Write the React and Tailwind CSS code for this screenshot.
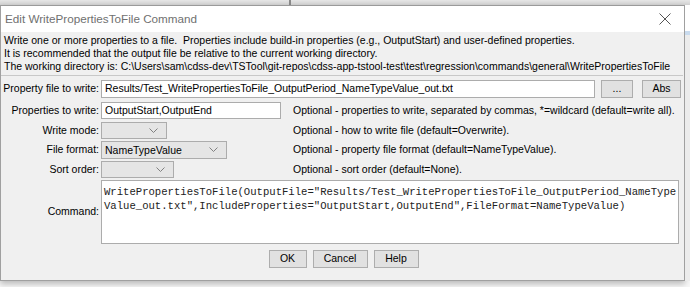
import React from "react";

const F = { fontFamily: '"Liberation Sans", Arial, sans-serif' };

function Combo({ w, value }) {
  return (
    <div
      className="flex items-center h-full border border-[#acacac] bg-[#e5e5e5]"
      style={{ width: w }}
    >
      <span className="flex-1 pl-[3px] text-[10.5px] text-black leading-none whitespace-nowrap">{value}</span>
      <svg width="9" height="6" viewBox="0 0 9 6" className="mr-[8px]">
        <path d="M0.5 0.5 L4.5 4.5 L8.5 0.5" fill="none" stroke="#808080" strokeWidth="1" />
      </svg>
    </div>
  );
}

function Btn({ children, w }) {
  return (
    <div
      className="flex items-center justify-center h-[18px] border border-[#adadad] bg-[#e1e1e1] text-[10.5px] text-black whitespace-nowrap"
      style={{ width: w }}
    >
      {children}
    </div>
  );
}

export default function App() {
  return (
    <div className="w-[690px] h-[287px] bg-[#f7f7f7] overflow-hidden relative text-black" style={F}>
      {/* background strip */}
      <div className="h-[5px] bg-gradient-to-b from-[#e6e6e6] to-[#d2d2d2] flex">
        <div className="w-[289px]" />
        <div className="w-[2px] bg-[#8a8a8a]" />
      </div>
      <div className="flex">
        <div className="w-[685px] h-[276px] border border-[#a0a0a0] border-t-[#9a9a9a] bg-[#f0f0f0] flex flex-col shadow-[0_3px_6px_rgba(0,0,0,0.25)]">
          {/* title bar */}
          <div className="h-[26px] bg-white flex items-center pl-[4px] shrink-0">
            <span className="flex-1 text-[11.7px] text-[#707070] whitespace-nowrap">Edit WritePropertiesToFile Command</span>
            <svg width="12" height="12" viewBox="0 0 12 12" className="mr-[13px]">
              <path d="M0.5 0.5 L11.5 11.5 M11.5 0.5 L0.5 11.5" stroke="#555" strokeWidth="1" />
            </svg>
          </div>
          {/* description */}
          <div className="pl-[3px] pt-[2px] text-[10.5px] leading-[13px] h-[43px] shrink-0 whitespace-nowrap">
            <div>Write one or more properties to a file.&nbsp; Properties include build-in properties (e.g., OutputStart) and user-defined properties.</div>
            <div>It is recommended that the output file be relative to the current working directory.</div>
            <div>The working directory is: C:\Users\sam\cdss-dev\TSTool\git-repos\cdss-app-tstool-test\test\regression\commands\general\WritePropertiesToFile</div>
          </div>
          <div className="h-[1px] bg-[#c8c8c8] mr-[1px]" />
          {/* form */}
          <div className="flex flex-col pt-[4px] text-[10.5px] whitespace-nowrap">
            <div className="flex items-center h-[18px]">
              <div className="w-[100px] text-right pr-[2px]">Property file to write:</div>
              <div className="w-[494px] h-full border border-[#acacac] bg-white flex items-center pl-[3px]">
                Results/Test_WritePropertiesToFile_OutputPeriod_NameTypeValue_out.txt
              </div>
              <div className="w-[6px]" />
              <Btn w={32}>...</Btn>
              <div className="w-[9px]" />
              <Btn w={39}>Abs</Btn>
            </div>
            <div className="flex items-center h-[17px] mt-[4px]">
              <div className="w-[100px] text-right pr-[2px]">Properties to write:</div>
              <div className="w-[180px] h-full border border-[#acacac] bg-white flex items-center pl-[3px]">
                OutputStart,OutputEnd
              </div>
              <div className="pl-[12px]">Optional - properties to write, separated by commas, *=wildcard (default=write all).</div>
            </div>
            <div className="flex items-center h-[17px] mt-[3px]">
              <div className="w-[100px] text-right pr-[2px]">Write mode:</div>
              <Combo w={66} value="" />
              <div className="pl-[126px]">Optional - how to write file (default=Overwrite).</div>
            </div>
            <div className="flex items-center h-[18px] mt-[2px]">
              <div className="w-[100px] text-right pr-[2px]">File format:</div>
              <Combo w={126} value="NameTypeValue" />
              <div className="pl-[66px]">Optional - property file format (default=NameTypeValue).</div>
            </div>
            <div className="flex items-center h-[17px] mt-[2px]">
              <div className="w-[100px] text-right pr-[2px]">Sort order:</div>
              <Combo w={73} value="" />
              <div className="pl-[119px]">Optional - sort order (default=None).</div>
            </div>
            <div className="flex items-center h-[64px] mt-[2px]">
              <div className="w-[100px] text-right pr-[2px]">Command:</div>
              <div
                className="w-[578px] h-full border border-[#acacac] bg-white pl-[2px] pt-[4px] text-[10.6px] leading-[14px] text-[#222]"
                style={{ fontFamily: '"Liberation Mono", "Courier New", monospace' }}
              >
                <div>WritePropertiesToFile(OutputFile="Results/Test_WritePropertiesToFile_OutputPeriod_NameType</div>
                <div>Value_out.txt",IncludeProperties="OutputStart,OutputEnd",FileFormat=NameTypeValue)</div>
              </div>
            </div>
            <div className="flex justify-center gap-[6px] mt-[6px] pl-[2px]">
              <Btn w={38}>OK</Btn>
              <Btn w={55}>Cancel</Btn>
              <Btn w={45}>Help</Btn>
            </div>
          </div>
        </div>
        <div className="flex-1 flex flex-col">
          <div className="h-[26px] bg-white" />
          <div className="h-[4px] bg-[#c9dbee]" />
          <div className="flex-1 bg-[#ececec]" />
        </div>
      </div>
    </div>
  );
}
